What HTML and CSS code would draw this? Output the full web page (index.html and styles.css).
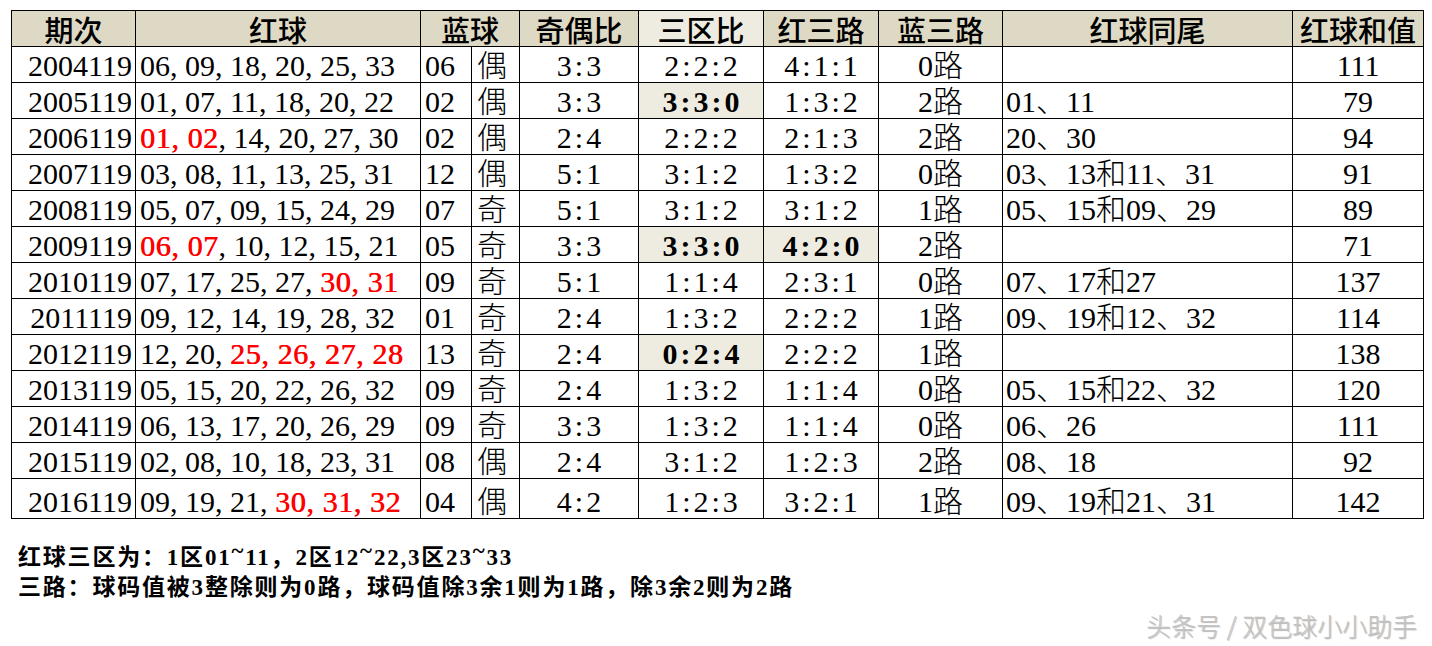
FILE: index.html
```html
<!DOCTYPE html>
<html lang="zh-CN">
<head>
<meta charset="utf-8">
<title>双色球119期历史数据</title>
<link rel="stylesheet" href="styles.css">
</head>
<body>
<div class="sheet">
  <table class="lotto">
    <colgroup>
      <col class="w-issue"><col class="w-red"><col class="w-blue"><col class="w-par">
      <col class="w-oe"><col class="w-zone"><col class="w-r3"><col class="w-b3">
      <col class="w-tail"><col class="w-sum">
    </colgroup>
    <thead>
      <tr>
        <th>期次</th><th>红球</th><th colspan="2">蓝球</th><th>奇偶比</th>
        <th class="light">三区比</th><th>红三路</th><th>蓝三路</th><th>红球同尾</th><th>红球和值</th>
      </tr>
    </thead>
    <tbody>
      <tr><td class="issue">2004119</td><td class="balls">06, 09, 18, 20, 25, 33</td><td class="blue">06</td><td class="par">偶</td><td class="mid ratio">3:3</td><td class="mid ratio">2:2:2</td><td class="mid ratio">4:1:1</td><td class="mid">0路</td><td class="tail"></td><td class="mid">111</td></tr>
      <tr><td class="issue">2005119</td><td class="balls">01, 07, 11, 18, 20, 22</td><td class="blue">02</td><td class="par">偶</td><td class="mid ratio">3:3</td><td class="mid ratio hl">3:3:0</td><td class="mid ratio">1:3:2</td><td class="mid">2路</td><td class="tail">01、11</td><td class="mid">79</td></tr>
      <tr><td class="issue">2006119</td><td class="balls"><span class="hot">01, 02</span>, 14, 20, 27, 30</td><td class="blue">02</td><td class="par">偶</td><td class="mid ratio">2:4</td><td class="mid ratio">2:2:2</td><td class="mid ratio">2:1:3</td><td class="mid">2路</td><td class="tail">20、30</td><td class="mid">94</td></tr>
      <tr><td class="issue">2007119</td><td class="balls">03, 08, 11, 13, 25, 31</td><td class="blue">12</td><td class="par">偶</td><td class="mid ratio">5:1</td><td class="mid ratio">3:1:2</td><td class="mid ratio">1:3:2</td><td class="mid">0路</td><td class="tail">03、13和11、31</td><td class="mid">91</td></tr>
      <tr><td class="issue">2008119</td><td class="balls">05, 07, 09, 15, 24, 29</td><td class="blue">07</td><td class="par">奇</td><td class="mid ratio">5:1</td><td class="mid ratio">3:1:2</td><td class="mid ratio">3:1:2</td><td class="mid">1路</td><td class="tail">05、15和09、29</td><td class="mid">89</td></tr>
      <tr><td class="issue">2009119</td><td class="balls"><span class="hot">06, 07</span>, 10, 12, 15, 21</td><td class="blue">05</td><td class="par">奇</td><td class="mid ratio">3:3</td><td class="mid ratio hl">3:3:0</td><td class="mid ratio hl">4:2:0</td><td class="mid">2路</td><td class="tail"></td><td class="mid">71</td></tr>
      <tr><td class="issue">2010119</td><td class="balls">07, 17, 25, 27, <span class="hot">30, 31</span></td><td class="blue">09</td><td class="par">奇</td><td class="mid ratio">5:1</td><td class="mid ratio">1:1:4</td><td class="mid ratio">2:3:1</td><td class="mid">0路</td><td class="tail">07、17和27</td><td class="mid">137</td></tr>
      <tr><td class="issue">2011119</td><td class="balls">09, 12, 14, 19, 28, 32</td><td class="blue">01</td><td class="par">奇</td><td class="mid ratio">2:4</td><td class="mid ratio">1:3:2</td><td class="mid ratio">2:2:2</td><td class="mid">1路</td><td class="tail">09、19和12、32</td><td class="mid">114</td></tr>
      <tr><td class="issue">2012119</td><td class="balls">12, 20, <span class="hot">25, 26, 27, 28</span></td><td class="blue">13</td><td class="par">奇</td><td class="mid ratio">2:4</td><td class="mid ratio hl">0:2:4</td><td class="mid ratio">2:2:2</td><td class="mid">1路</td><td class="tail"></td><td class="mid">138</td></tr>
      <tr><td class="issue">2013119</td><td class="balls">05, 15, 20, 22, 26, 32</td><td class="blue">09</td><td class="par">奇</td><td class="mid ratio">2:4</td><td class="mid ratio">1:3:2</td><td class="mid ratio">1:1:4</td><td class="mid">0路</td><td class="tail">05、15和22、32</td><td class="mid">120</td></tr>
      <tr><td class="issue">2014119</td><td class="balls">06, 13, 17, 20, 26, 29</td><td class="blue">09</td><td class="par">奇</td><td class="mid ratio">3:3</td><td class="mid ratio">1:3:2</td><td class="mid ratio">1:1:4</td><td class="mid">0路</td><td class="tail">06、26</td><td class="mid">111</td></tr>
      <tr><td class="issue">2015119</td><td class="balls">02, 08, 10, 18, 23, 31</td><td class="blue">08</td><td class="par">偶</td><td class="mid ratio">2:4</td><td class="mid ratio">3:1:2</td><td class="mid ratio">1:2:3</td><td class="mid">2路</td><td class="tail">08、18</td><td class="mid">92</td></tr>
      <tr class="last"><td class="issue">2016119</td><td class="balls">09, 19, 21, <span class="hot">30, 31, 32</span></td><td class="blue">04</td><td class="par">偶</td><td class="mid ratio">4:2</td><td class="mid ratio">1:2:3</td><td class="mid ratio">3:2:1</td><td class="mid">1路</td><td class="tail">09、19和21、31</td><td class="mid">142</td></tr>
    </tbody>
  </table>

  <div class="notes">
    <p>红球三区为：1区01<span class="tilde">~</span>11，2区12<span class="tilde">~</span>22,3区23<span class="tilde">~</span>33</p>
    <p>三路：球码值被3整除则为0路，球码值除3余1则为1路，除3余2则为2路</p>
  </div>

  <div class="watermark">头条号 / 双色球小小助手</div>
</div>
</body>
</html>
```

FILE: styles.css
```css
html, body {
  margin: 0;
  padding: 0;
  background: #ffffff;
}

.sheet {
  width: 1432px;
  height: 646px;
  padding: 10px 0 0 11px;
  box-sizing: border-box;
  font-family: "Liberation Serif", "Noto Sans CJK SC", serif;
  color: #000;
}

.lotto {
  border-collapse: collapse;
  table-layout: fixed;
  width: 1412px;
  font-size: 30px;
}

.w-issue { width: 124px; }
.w-red   { width: 285px; }
.w-blue  { width: 51px; }
.w-par   { width: 48px; }
.w-oe    { width: 119px; }
.w-zone  { width: 125px; }
.w-r3    { width: 115px; }
.w-b3    { width: 124px; }
.w-tail  { width: 290px; }
.w-sum   { width: 131px; }

.lotto th,
.lotto td {
  border: 1px solid #000;
  padding: 0 4px;
  line-height: 32px;
  vertical-align: bottom;
  white-space: nowrap;
}

.lotto td { overflow: hidden; }

.lotto th {
  height: 35px;
  background: #ddd9c4;
  font-family: "Noto Sans CJK SC", sans-serif;
  font-weight: 500;
  font-size: 29px;
  text-align: center;
  line-height: 34px;
  overflow: visible;
}

.lotto th.light { background: #eeece1; }

.lotto tbody tr { height: 36px; }
.lotto tbody tr.last { height: 40px; }

.lotto td { font-weight: 300; }

.lotto td.issue { text-align: right; padding-right: 3px; }
.lotto td.balls { text-align: left; padding-left: 4px; }
.lotto td.blue  { text-align: left; padding-left: 4px; }
.lotto td.par   { text-align: left; padding-left: 5px; }
.lotto td.mid   { text-align: center; }
.lotto td.tail  { text-align: left; padding-left: 3px; }

.lotto td.ratio { letter-spacing: 3px; text-indent: 3px; }

.lotto td.hl {
  background: #eeece1;
  font-weight: 700;
}

.hot {
  color: #ff0000;
  font-weight: 400;
  letter-spacing: 0.6px;
  text-shadow: 0.6px 0 0 #ff0000;
}

.notes {
  margin-top: 24px;
  margin-left: 7px;
  font-family: "Liberation Serif", "Noto Sans CJK SC", serif;
  font-weight: 700;
  font-size: 23px;
  letter-spacing: 1.8px;
}

.notes p {
  margin: 0;
  line-height: 30px;
}

.tilde {
  position: relative;
  top: -7px;
}

.watermark {
  margin-top: 4px;
  padding-right: 15px;
  text-align: right;
  font-family: "Noto Sans CJK SC", sans-serif;
  font-weight: 300;
  font-size: 25px;
  color: #c4c4c4;
  text-shadow: 1px 1px 1px rgba(0, 0, 0, 0.3);
}
```
